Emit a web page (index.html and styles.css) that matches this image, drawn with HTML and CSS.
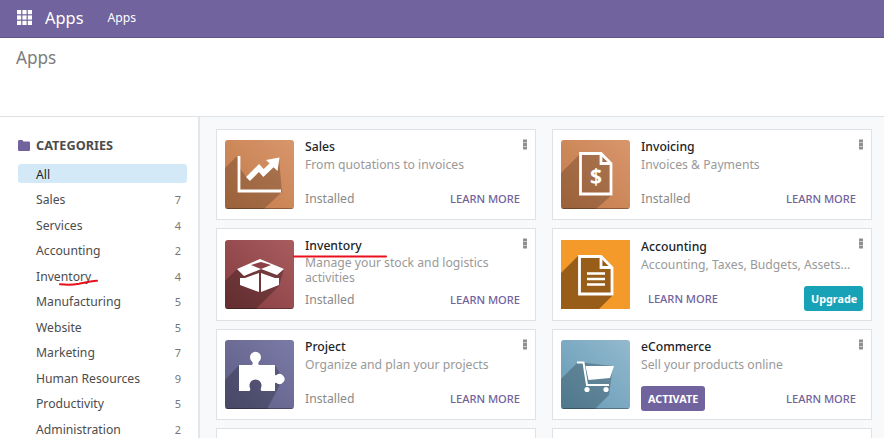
FILE: index.html
```html
<!DOCTYPE html>
<html lang="en">
<head>
<meta charset="utf-8">
<title>Apps</title>
<link rel="stylesheet" href="styles.css">
</head>
<body>
<header class="navbar">
  <svg class="grid-icon" width="15" height="15" viewBox="0 0 15 15" aria-hidden="true">
    <g fill="#fff">
      <rect x="0" y="0" width="4.2" height="4.2"/><rect x="5.4" y="0" width="4.2" height="4.2"/><rect x="10.8" y="0" width="4.2" height="4.2"/>
      <rect x="0" y="5.4" width="4.2" height="4.2"/><rect x="5.4" y="5.4" width="4.2" height="4.2"/><rect x="10.8" y="5.4" width="4.2" height="4.2"/>
      <rect x="0" y="10.8" width="4.2" height="4.2"/><rect x="5.4" y="10.8" width="4.2" height="4.2"/><rect x="10.8" y="10.8" width="4.2" height="4.2"/>
    </g>
  </svg>
  <span class="brand">Apps</span>
  <span class="menu">Apps</span>
</header>
<section class="control-panel"><h1 class="page-title">Apps</h1></section>
<div class="layout">
  <aside class="sidebar">
    <div class="side-head">
      <svg class="folder" width="12" height="11" viewBox="0 0 12 11" aria-hidden="true"><path d="M0 1.5C0 .7.6 0 1.3 0h2.6c.6 0 1 .4 1.2 1l.2.5h5.4c.7 0 1.3.6 1.3 1.3v6.9c0 .7-.6 1.3-1.3 1.3H1.3C.6 11 0 10.400 0 9.700z" fill="#71639e"/></svg>
      <span>CATEGORIES</span>
    </div>
    <ul class="cats">
      <li class="cat cat-active"><span>All</span></li>
      <li class="cat"><span>Sales</span><span class="count">7</span></li>
      <li class="cat"><span>Services</span><span class="count">4</span></li>
      <li class="cat"><span>Accounting</span><span class="count">2</span></li>
      <li class="cat cat-marked"><span>Inventory</span><span class="count">4</span>
        <svg class="scribble" width="40" height="8" viewBox="0 0 40 8" aria-hidden="true"><path d="M1 6.200C8 7 14 6.800 20 5.800 26 4.500 32 3 38 2.800" fill="none" stroke="#e8101c" stroke-width="2" stroke-linecap="round"/></svg>
      </li>
      <li class="cat"><span>Manufacturing</span><span class="count">5</span></li>
      <li class="cat"><span>Website</span><span class="count">5</span></li>
      <li class="cat"><span>Marketing</span><span class="count">7</span></li>
      <li class="cat"><span>Human Resources</span><span class="count">9</span></li>
      <li class="cat"><span>Productivity</span><span class="count">5</span></li>
      <li class="cat"><span>Administration</span><span class="count">2</span></li>
    </ul>
  </aside>
  <main class="board">
    <article class="card">
      <svg class="app-icon" viewBox="0 0 69 69" aria-hidden="true">
        <defs>
          <linearGradient id="g-orange" x1="0" y1="1" x2="1" y2="0"><stop offset="0" stop-color="#c27a48"/><stop offset="1" stop-color="#d8966c"/></linearGradient>
          <linearGradient id="g-red" x1="0" y1="1" x2="1" y2="0"><stop offset="0" stop-color="#853c40"/><stop offset="1" stop-color="#a85c5e"/></linearGradient>
          <linearGradient id="g-purple" x1="0" y1="1" x2="1" y2="0"><stop offset="0" stop-color="#5c5b83"/><stop offset="1" stop-color="#7b7ba8"/></linearGradient>
          <linearGradient id="g-blue" x1="0" y1="1" x2="1" y2="0"><stop offset="0" stop-color="#659ab5"/><stop offset="1" stop-color="#93b9ce"/></linearGradient>
        </defs>
        <rect width="69" height="69" fill="url(#g-orange)"/>
        <path d="M0 28 12 16 16 30 22 38 34 27 38 32 47 23 54 18 57 52 39 69H0z" fill="#000" opacity=".2"/>
        <rect y="68" width="69" height="1" fill="#000" opacity=".3"/>
        <path d="M14 16V51H56" fill="none" stroke="#fff" stroke-width="2.800"/>
        <path d="M23 39 34 28 38.500 33 48 24" fill="none" stroke="#fff" stroke-width="5.500"/>
        <path d="M54.500 17.500 41 20 52.500 31z" fill="#fff"/>
      </svg>
      <div class="body">
        <h2 class="name">Sales</h2>
        <p class="desc">From quotations to invoices</p>
        <div class="foot"><span class="state">Installed</span><a class="learn">LEARN MORE</a></div>
      </div>
      <i class="dots"></i>
    </article>
    <article class="card">
      <svg class="app-icon" viewBox="0 0 69 69" aria-hidden="true">
        <rect width="69" height="69" fill="url(#g-orange)"/>
        <path d="M0 33 18 15 40 13 51 24V55L35 69H0z" fill="#000" opacity=".2"/>
        <rect y="68" width="69" height="1" fill="#000" opacity=".3"/>
        <path d="M19.500 13.500H40L50 23.500V54H19.500z" fill="none" stroke="#fff" stroke-width="2.800"/>
        <path d="M40 13.500V23.500H50" fill="none" stroke="#fff" stroke-width="2.800"/>
        <text class="dollar" x="35" y="44" text-anchor="middle">$</text>
      </svg>
      <div class="body">
        <h2 class="name">Invoicing</h2>
        <p class="desc">Invoices &amp; Payments</p>
        <div class="foot"><span class="state">Installed</span><a class="learn">LEARN MORE</a></div>
      </div>
      <i class="dots"></i>
    </article>
    <article class="card">
      <svg class="app-icon" viewBox="0 0 69 69" aria-hidden="true">
        <rect width="69" height="69" fill="url(#g-red)"/>
        <path d="M0 41 12 29 59 29 54 46 31 69H0z" fill="#000" opacity=".25"/>
        <rect y="68" width="69" height="1" fill="#000" opacity=".3"/>
        <path d="M12 29 35 19 59 29 52 35 36 29 19 36z" fill="#fff"/>
        <path d="M26 25 36 22 46 25 36 29z" fill="#8a4044"/>
        <path d="M15 38 20 38 34 33V52L15 45zM36 33 50 38 54 38V45L36 52z" fill="#fff"/>
      </svg>
      <div class="body">
        <h2 class="name">Inventory</h2>
        <p class="desc desc-wrap">Manage your stock and logistics activities</p>
        <div class="foot"><span class="state">Installed</span><a class="learn">LEARN MORE</a></div>
      </div>
      <i class="dots"></i>
      <svg class="scribble-line" width="94" height="3" viewBox="0 0 94 3" aria-hidden="true"><path d="M1 1.500H93" stroke="#e8101c" stroke-width="2" stroke-linecap="round"/></svg>
    </article>
    <article class="card">
      <svg class="app-icon app-icon-flat" viewBox="0 0 69 69" aria-hidden="true">
        <rect width="69" height="69" fill="#f39a2b"/>
        <path d="M0 33 17 16 40 15 52 27V55L38 69H0z" fill="#985d19"/>
        <path d="M18.500 16.500H40L51 27.500V54H18.500z" fill="none" stroke="#fff" stroke-width="2.800"/>
        <path d="M40 16.500V27.500H51" fill="none" stroke="#fff" stroke-width="2.800"/>
        <path d="M26 33.500H44M26 39H44M26 44.500H44" stroke="#fff" stroke-width="2.400"/>
      </svg>
      <div class="body">
        <h2 class="name">Accounting</h2>
        <p class="desc">Accounting, Taxes, Budgets, Assets...</p>
        <div class="foot"><a class="learn learn-pad">LEARN MORE</a><button class="btn btn-upgrade">Upgrade</button></div>
      </div>
      <i class="dots"></i>
    </article>
    <article class="card">
      <svg class="app-icon" viewBox="0 0 69 69" aria-hidden="true">
        <rect width="69" height="69" fill="url(#g-purple)"/>
        <path d="M0 40 14 25 50 25 58 39 42 69H0z" fill="#000" opacity=".22"/>
        <rect y="68" width="69" height="1" fill="#000" opacity=".3"/>
        <path d="M14 25H26.500C28 25 28 23 27 21.500A5.500 5.500 0 1 1 34 21.500C33 23 33 25 34.500 25H50V34C50 35.500 51 35.500 51.500 35A5 5 0 1 1 51.500 43C51 42.500 50 42.500 50 44V51H37C35.500 51 35.500 49 36 48A6 6 0 1 0 25 48C25.500 49 25.500 51 24 51H14z" fill="#fff"/>
      </svg>
      <div class="body">
        <h2 class="name">Project</h2>
        <p class="desc">Organize and plan your projects</p>
        <div class="foot"><span class="state">Installed</span><a class="learn">LEARN MORE</a></div>
      </div>
      <i class="dots"></i>
    </article>
    <article class="card">
      <svg class="app-icon" viewBox="0 0 69 69" aria-hidden="true">
        <rect width="69" height="69" fill="url(#g-blue)"/>
        <path d="M0 39 17 22 52 26 48 55 34 69H0z" fill="#000" opacity=".22"/>
        <rect y="68" width="69" height="1" fill="#000" opacity=".3"/>
        <path d="M16 22.500H22.500L26 45H48" fill="none" stroke="#fff" stroke-width="2"/>
        <path d="M24.500 26H53L49 38 27.500 40z" fill="#fff"/>
        <circle cx="26" cy="49.500" r="2.600" fill="#fff"/><circle cx="45" cy="49.500" r="2.600" fill="#fff"/>
      </svg>
      <div class="body">
        <h2 class="name">eCommerce</h2>
        <p class="desc">Sell your products online</p>
        <div class="foot"><button class="btn btn-activate">ACTIVATE</button><a class="learn">LEARN MORE</a></div>
      </div>
      <i class="dots"></i>
    </article>
    <article class="card"></article>
    <article class="card"></article>
  </main>
</div>
</body>
</html>
```

FILE: styles.css
```css
* { box-sizing: border-box; }
html, body { margin: 0; height: 438px; overflow: hidden; }
body {
  font-family: "Noto Sans", "Open Sans", sans-serif;
  font-size: 12.2px;
  color: #4c4c4c;
  background: #fff;
  display: flex;
  flex-direction: column;
}
.navbar {
  height: 38px;
  flex: none;
  background: #71639e;
  border-bottom: 1px solid #5f5388;
  color: #fff;
  display: flex;
  align-items: center;
  padding: 0 0 2px 17px;
}
.grid-icon { flex: none; margin-top: -1px; }
.brand { font-size: 16.400px; margin-left: 13px; }
.menu { font-size: 12.200px; margin-left: 24px; }
.control-panel {
  height: 79px;
  flex: none;
  padding: 7px 16px 0;
  border-bottom: 1px solid #dee2e6;
}
.page-title { margin: 0; font-size: 17.200px; line-height: 25px; font-weight: 400; color: #7c7c7c; }
.layout { flex: 1; display: flex; min-height: 0; overflow: hidden; }
.sidebar {
  width: 200px;
  flex: none;
  padding: 18px 11px 0 18px;
  border-right: 2px solid #e4e6ea;
  background: #fff;
}
.side-head {
  display: flex;
  align-items: center;
  gap: 6px;
  height: 20px;
  margin-bottom: 9px;
  font-size: 12.700px;
  font-weight: 700;
  color: #4c4c4c;
}
.cats { list-style: none; margin: 0; padding: 0; display: flex; flex-direction: column; gap: 6.5px; }
.cat {
  height: 19px;
  line-height: 19.500px;
  padding: 0.5px 6px 0 18px;
  display: flex;
  justify-content: space-between;
  position: relative;
}
.cat-active { background: #d4e9f7; border-radius: 3px; color: #212529; }
.count { font-size: 11px; color: #777; }
.scribble { position: absolute; left: 41px; top: 12px; }
.board {
  flex: 1;
  align-self: flex-start;
  background: #f8f9fb;
  padding: 12px 12px 0 16px;
  display: grid;
  grid-template-columns: 320px 320px;
  align-content: start;
  column-gap: 16px;
  row-gap: 8px;
}
.card {
  position: relative;
  min-height: 91px;
  background: #fff;
  border: 1px solid #dee2e6;
  padding: 6px 8px;
  display: flex;
  align-items: center;
  gap: 11px;
}
.app-icon { width: 69px; height: 69px; flex: none; border-radius: 3px; }
.app-icon-flat { border-radius: 0; }
.body { flex: 1; min-width: 0; align-self: center; display: flex; flex-direction: column; padding-bottom: 2px; }
.name { margin: 0 0 -2px; font-size: 12.200px; line-height: 22px; font-weight: 500; color: #212529; }
.desc { margin: 0; font-size: 12.200px; line-height: 18px; color: #999; }
.desc-wrap { line-height: 15px; }
.foot { margin-top: 12px; height: 25px; display: flex; justify-content: space-between; align-items: center; }
.desc-wrap + .foot { margin-top: 2px; }
.state { color: #8a8a8a; }
.learn { font-size: 11.100px; font-weight: 500; color: #71639e; padding-right: 7px; }
.learn-pad { padding-left: 7px; }
.btn { height: 25px; border: 0; border-radius: 3px; color: #fff; font: 700 10.800px "Noto Sans", sans-serif; padding: 0 7px; }
.btn-upgrade { background: #17a2b8; width: 59px; }
.btn-activate { background: #71639e; width: 64px; }
.dots {
  position: absolute;
  right: 8px;
  top: 13px;
  width: 4px;
  height: 2.500px;
  background: #8f8f8f;
  box-shadow: 0 -3.500px 0 #8f8f8f, 0 3.500px 0 #8f8f8f;
}
.scribble-line { position: absolute; left: 76px; top: 26px; }
.dollar { font: 700 21px "Noto Sans", sans-serif; fill: #fff; }
```
